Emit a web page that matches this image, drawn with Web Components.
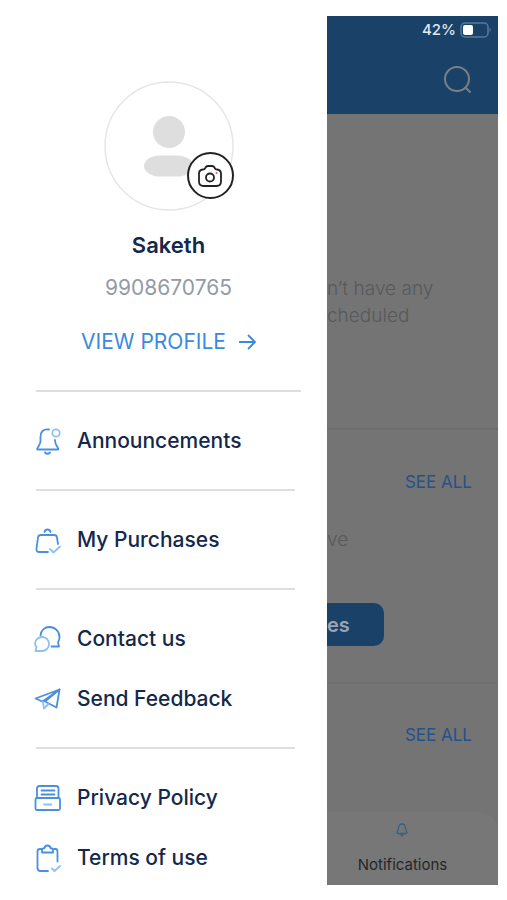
<!DOCTYPE html>
<html lang="en">
<head>
<meta charset="utf-8">
<meta name="viewport" content="width=device-width, initial-scale=1">
<title>Profile menu</title>
<style>
  body { margin: 0; background: #fff; font-family: Inter, "Liberation Sans", sans-serif; color: #14284b; }
</style>
</head>
<body>
<app-shell>
  <side-drawer slot="drawer">
    <profile-card slot="profile" name="Saketh" phone="9908670765"></profile-card>
    <menu-section><menu-item icon="bell">Announcements</menu-item></menu-section>
    <menu-section><menu-item icon="bag">My Purchases</menu-item></menu-section>
    <menu-section>
      <menu-item icon="chat">Contact us</menu-item>
      <menu-item icon="plane">Send Feedback</menu-item>
    </menu-section>
    <menu-section>
      <menu-item icon="archive">Privacy Policy</menu-item>
      <menu-item icon="clipboard">Terms of use</menu-item>
    </menu-section>
  </side-drawer>
  <home-screen slot="screen"></home-screen>
</app-shell>

<script>
const define = (name, html, setup) => {
  const template = document.createElement('template');
  template.innerHTML = html;
  customElements.define(name, class extends HTMLElement {
    constructor() {
      super();
      this.attachShadow({ mode: 'open' }).append(template.content.cloneNode(true));
    }
    connectedCallback() { if (setup) setup(this, this.shadowRoot); }
  });
};

const icons = {
  bell: `<path d="M15 2.500C9 1.500 6.500 5 6.500 10V14Q6.500 16 5 18.500L3.500 21Q2.500 22.500 4 22.500H23.500Q25 22.500 24 21L22.500 18.500Q21 16 21 13"/><path d="M11 25.500Q13.500 28 16 25.500"/><circle class="soft" cx="22" cy="6" r="3.700"/>`,
  bag: `<path d="M14 26H5.500Q2 26 2.500 22.500L4 11.500Q4.300 9 7 9H20Q22.700 9 23 11.500L24 18"/><path d="M10.500 6Q11 3.500 13.500 3.500T16.500 6"/><path class="soft" d="M16 23L19.500 26.500L26 20.500"/>`,
  chat: `<path d="M6.500 10.500C7 5 11 2 15.500 2C21 2 25.500 6.500 25.500 12Q25.500 15 24 17.500L25 21.500H17.500"/><path class="soft" d="M2.500 22Q1 20 1 18.500A7 7 0 1 1 8 26H1.500Z"/>`,
  plane: `<path d="M25.500 4.500L1.500 13.500L8.500 16.500Z"/><path d="M25.500 4.500L11 16.500L22.500 22.500Z"/><path class="soft" d="M9 17L10 23.500L14.500 19"/>`,
  archive: `<path d="M3 14V4.500Q3 2 5.500 2H22Q24.500 2 24.500 4.500V14"/><rect x="1.500" y="14" width="24.500" height="12" rx="1.500"/><path d="M7.500 6.500H20.500M7.500 10.500H20.500"/><path class="soft" d="M10 20.500H17.500"/>`,
  clipboard: `<path d="M8 5H6Q3.500 5 3.500 7.500V24Q3.500 27 6.500 27H14M20 5H21.500Q23.500 5 23.500 7.500V17.500"/><path d="M8 8.500V6Q8 4.500 10.500 4Q11 1.500 13.500 1.500T16.500 4Q19 4.500 19 6V8.500Z"/><path class="soft" d="M18 24.500L20.500 27L26 22"/>`
};

define('menu-item', `
  <style>
    :host { display: block; }
    a { display: flex; align-items: center; gap: 15px; height: 60px; color: inherit; text-decoration: none; font-size: 21px; font-weight: 500; line-height: 28px; }
    svg { flex: none; width: 28px; height: 28px; margin-left: -2px; fill: none; stroke: #4a90dc; stroke-width: 1.800; stroke-linecap: round; stroke-linejoin: round; }
    .soft { stroke: #8fc0ef; }
  </style>
  <a href="#"><svg viewBox="0 0 28 28" aria-hidden="true"></svg><span><slot></slot></span></a>`,
  (el, root) => { root.querySelector('svg').innerHTML = icons[el.getAttribute('icon')]; });

define('menu-section', `
  <style>
    :host { display: block; border-top: 2px solid #dedede; padding: 19px 0 18px; margin-right: 6px; }
    :host(:first-of-type) { margin-right: 0; }
  </style>
  <slot></slot>`);

define('profile-card', `
  <style>
    :host { display: flex; flex-direction: column; align-items: center; padding-bottom: 34px; }
    .avatar { position: relative; width: 130px; height: 130px; margin-bottom: 20px; }
    .avatar > svg { display: block; width: 100%; height: 100%; }
    button { position: absolute; right: 0; bottom: 12px; width: 47px; height: 47px; padding: 0; border: 2px solid #222; border-radius: 50%; background: #fff; display: grid; place-items: center; }
    button svg { width: 26px; height: 24px; fill: none; stroke: #222; stroke-width: 1.800; stroke-linejoin: round; }
    h1, p { margin: 0; line-height: 28px; font-size: 21px; }
    h1 { font-weight: 600; font-size: 22px; }
    p { color: #949aa6; margin-top: 15px; }
    a { display: flex; align-items: center; gap: 13px; margin-top: 26px; color: #398ade; text-decoration: none; font-size: 21px; line-height: 28px; }
    a svg { width: 17px; height: 16px; fill: none; stroke: currentColor; stroke-width: 1.800; }
  </style>
  <div class="avatar">
    <svg viewBox="0 0 130 130" aria-hidden="true">
      <circle cx="65" cy="65" r="64" fill="#fff" stroke="#e6e6e6" stroke-width="1.500"/>
      <circle cx="65" cy="51" r="16" fill="#dedede"/>
      <rect x="40" y="74.500" width="49" height="21" rx="16" ry="10.500" fill="#dedede"/>
    </svg>
    <button type="button" aria-label="Change photo">
      <svg viewBox="0 0 26 24" aria-hidden="true"><path d="M8 4.500Q9 2 11 2H15Q17 2 18 4.500Q18.500 5.500 20 5.500Q24 6 24 9.500V17.500Q24 22 19.500 22H6.500Q2 22 2 17.500V9.500Q2 6 6 5.500Q7.500 5.500 8 4.500Z"/><circle cx="13" cy="13.500" r="4"/><circle cx="19.500" cy="9" r="1" fill="#e8496a" stroke="none"/></svg>
    </button>
  </div>
  <h1></h1>
  <p></p>
  <a href="#">VIEW PROFILE <svg viewBox="0 0 17 16" aria-hidden="true"><path d="M0 8H16M9 1L16 8L9 15"/></svg></a>`,
  (el, root) => {
    root.querySelector('h1').textContent = el.getAttribute('name');
    root.querySelector('p').textContent = el.getAttribute('phone');
  });

define('side-drawer', `
  <style>
    :host { display: block; box-sizing: border-box; padding: 65px 26px 0 36px; background: #fff; }
  </style>
  <slot name="profile"></slot>
  <nav aria-label="Account"><slot></slot></nav>`);

define('status-bar', `
  <style>
    :host { display: flex; justify-content: flex-end; align-items: center; gap: 4px; padding: 4px 6px 0 0; color: #dfe8f1; font-size: 15px; line-height: 20px; font-weight: 500; }
    svg { width: 32px; height: 16px; }
  </style>
  <span>42%</span>
  <svg viewBox="0 0 32 16" aria-hidden="true"><rect x="1" y="1" width="27" height="14" rx="4" fill="none" stroke="#58789a" stroke-width="1.500"/><rect x="3" y="3" width="10" height="10" rx="2" fill="#fff"/><path d="M29.500 5.500Q32 8 29.500 10.500Z" fill="#58789a"/></svg>`);

define('home-screen', `
  <style>
    :host { display: flex; flex-direction: column; overflow: hidden; background: #747474; color: #57595d; }
    header { height: 98px; background: #1a4268; }
    .search { display: block; margin: 25px 25px 0 auto; padding: 0; border: 0; background: none; }
    .search svg { display: block; width: 30px; height: 30px; fill: none; stroke: #7b7f84; stroke-width: 2; }
    section { border-bottom: 2px solid #6c6c6c; box-sizing: border-box; }
    p { margin: 0; font-size: 19px; line-height: 27px; font-weight: 300; white-space: nowrap; }
    .empty { padding: 161px 0 99px; }
    .see { display: block; width: max-content; margin-left: auto; margin-right: 26px; color: #24528a; text-decoration: none; font-size: 17px; line-height: 24px; }
    .mine { padding: 40px 0 36px; }
    .mine p { margin-top: 32px; }
    .buy { display: block; width: 57px; height: 43px; margin-top: 50px; padding: 0; border: 0; border-radius: 0 10px 10px 0; background: #1a4268; color: #9aa5b1; font: 600 20px/28px Inter, sans-serif; text-align: left; }
    .mine, .last { border-color: #707070; }
    .last { border-bottom: 0; padding: 39px 0 65px; }
    footer { display: flex; justify-content: center; padding: 11px 20px 10px 0; background: #777; border-top-right-radius: 20px; }
    .tab { display: flex; flex-direction: column; align-items: center; gap: 18px; color: #252628; text-decoration: none; font-size: 15px; line-height: 20px; }
    .tab svg { width: 12px; height: 14px; fill: none; stroke: #346484; stroke-width: 1.300; }
  </style>
  <header>
    <status-bar></status-bar>
    <button class="search" type="button" aria-label="Search"><svg viewBox="0 0 30 30" aria-hidden="true"><circle cx="14" cy="14" r="12"/><path d="M22 22L27.500 27.500"/></svg></button>
  </header>
  <section class="empty"><p>n’t have any</p><p>cheduled</p></section>
  <section class="mine">
    <a class="see" href="#">SEE ALL</a>
    <p>ve</p>
    <button class="buy" type="button">es</button>
  </section>
  <section class="last"><a class="see" href="#">SEE ALL</a></section>
  <footer><a class="tab" href="#"><svg viewBox="0 0 12 14" aria-hidden="true"><path d="M6 1Q2.500 1 2.500 5.500L1 9.500Q1 10.500 2 10.500H10Q11 10.500 11 9.500L9.500 5.500Q9.500 1 6 1ZM4.500 11L6 13L7.500 11"/></svg>Notifications</a></footer>`);

define('app-shell', `
  <style>
    :host { display: grid; grid-template-columns: minmax(0, 327fr) minmax(0, 171fr); align-items: start; padding: 16px 9px 0 0; }
  </style>
  <slot name="drawer"></slot>
  <slot name="screen"></slot>`);
</script>
</body>
</html>
